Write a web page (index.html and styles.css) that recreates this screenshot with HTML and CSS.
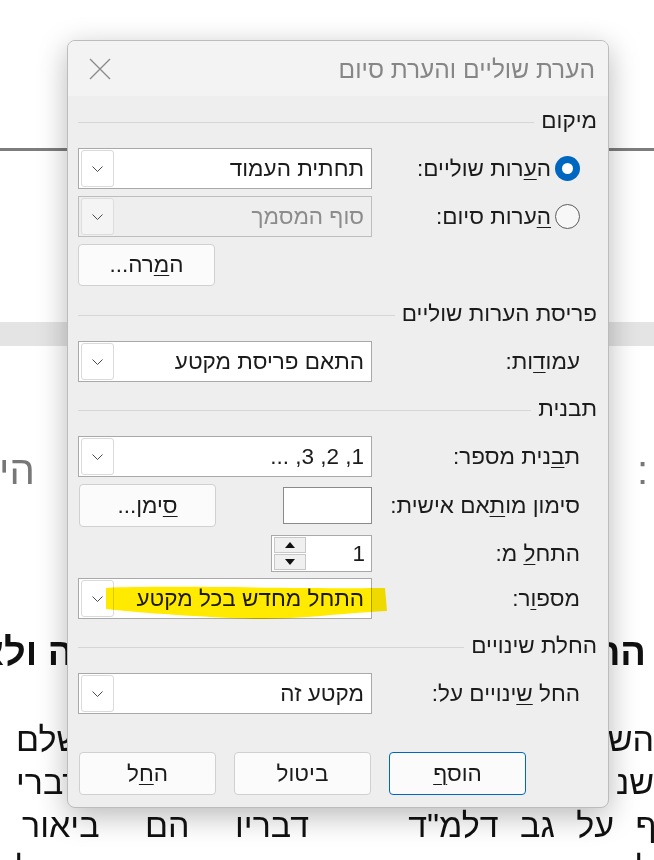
FILE: index.html
```html
<!DOCTYPE html>
<html lang="he" dir="rtl">
<head>
<meta charset="utf-8">
<title>הערת שוליים והערת סיום</title>
<link rel="stylesheet" href="styles.css">
</head>
<body>
<div class="doc">
  <div class="doc-top"></div>
  <div class="doc-rule"></div>
  <div class="doc-mid"></div>
  <div class="doc-band"></div>
  <div class="doc-page">
    <div class="line gray-line"><span>:</span><span>היא</span></div>
    <div class="line head-line"><span>הה</span><span>ה ולא</span></div>
    <div class="line body-line"><span>השו</span><span>שלם</span></div>
    <div class="line body-line"><span>שנ</span><span>דברי</span></div>
    <div class="line body-line cut-right"><span class="grp">אף על גב דלמ"ד</span><span class="grp">דבריו הם ביאור</span></div>
    <div class="line body-line"><span class="grp">לא כמו שכתב</span><span class="grp">הפשטות שבכתב הדל</span></div>
  </div>
</div>

<div class="dialog">
  <div class="titlebar">
    <span class="title">הערת שוליים והערת סיום</span>
    <svg class="close" viewBox="0 0 22 22" aria-hidden="true"><path d="M1 1L21 21M21 1L1 21"/></svg>
  </div>
  <div class="body">
    <div class="group-head first"><span>מיקום</span></div>
    <div class="row">
      <div class="lbl radio-lbl"><span class="radio on"></span><span>ה<u>ע</u>רות שוליים:</span></div>
      <div class="ctl">
        <div class="select"><span class="val">תחתית העמוד</span><span class="drop"><svg viewBox="0 0 11 6"><path d="M0.5 0.5L5.5 5.5L10.5 0.5"/></svg></span></div>
      </div>
    </div>
    <div class="row gap7">
      <div class="lbl radio-lbl"><span class="radio"></span><span><u>ה</u>ערות סיום:</span></div>
      <div class="ctl">
        <div class="select disabled"><span class="val">סוף המסמך</span><span class="drop"><svg viewBox="0 0 11 6"><path d="M0.5 0.5L5.5 5.5L10.5 0.5"/></svg></span></div>
      </div>
    </div>
    <div class="row gap7 btn-row">
      <div class="lbl"></div>
      <div class="ctl end"><button class="btn">ה<u>מ</u>רה...</button></div>
    </div>

    <div class="group-head second"><span>פריסת הערות שוליים</span></div>
    <div class="row">
      <div class="lbl"><span>עמו<u>ד</u>ות:</span></div>
      <div class="ctl">
        <div class="select"><span class="val">התאם פריסת מקטע</span><span class="drop"><svg viewBox="0 0 11 6"><path d="M0.5 0.5L5.5 5.5L10.5 0.5"/></svg></span></div>
      </div>
    </div>

    <div class="group-head"><span>תבנית</span></div>
    <div class="row">
      <div class="lbl"><span>ת<u>ב</u>נית מספר:</span></div>
      <div class="ctl">
        <div class="select"><span class="val">1, 2, 3, ...</span><span class="drop"><svg viewBox="0 0 11 6"><path d="M0.5 0.5L5.5 5.5L10.5 0.5"/></svg></span></div>
      </div>
    </div>
    <div class="row gap7 mark-row">
      <div class="lbl"><span>סימון מו<u>ת</u>אם אישית:</span></div>
      <div class="ctl between">
        <div class="textbox"></div>
        <button class="btn"><u>ס</u>ימן...</button>
      </div>
    </div>
    <div class="row spin-row">
      <div class="lbl"><span>התח<u>ל</u> מ:</span></div>
      <div class="ctl">
        <div class="spin">
          <span class="spin-val">1</span>
          <span class="spin-btns">
            <span class="spin-btn"><svg viewBox="0 0 10 6"><path d="M0 6L5 0L10 6Z"/></svg></span>
            <span class="spin-btn"><svg viewBox="0 0 10 6"><path d="M0 0L10 0L5 6Z"/></svg></span>
          </span>
        </div>
      </div>
    </div>
    <div class="row gap6">
      <div class="lbl"><span>מספ<u>ו</u>ר:</span></div>
      <div class="ctl">
        <div class="select"><span class="val">התחל מחדש בכל מקטע</span><span class="drop"><svg viewBox="0 0 11 6"><path d="M0.5 0.5L5.5 5.5L10.5 0.5"/></svg></span></div>
      </div>
    </div>

    <div class="group-head"><span>החלת שינויים</span></div>
    <div class="row">
      <div class="lbl"><span>החל <u>ש</u>ינויים על:</span></div>
      <div class="ctl">
        <div class="select"><span class="val">מקטע זה</span><span class="drop"><svg viewBox="0 0 11 6"><path d="M0.5 0.5L5.5 5.5L10.5 0.5"/></svg></span></div>
      </div>
    </div>

    <div class="actions">
      <button class="btn default">הוס<u>ף</u></button>
      <button class="btn">ביטול</button>
      <button class="btn">ה<u>ח</u>ל</button>
    </div>
  </div>
  <svg class="marker" viewBox="0 0 290 40" aria-hidden="true"><path d="M4 5C60 2 200 6 283 5L285 28C230 31 200 36 153 36C100 34 40 30 4 26Z"/></svg>
</div>
</body>
</html>
```

FILE: styles.css
```css
* { box-sizing: border-box; }
html, body { margin: 0; padding: 0; }
body {
  width: 654px;
  height: 860px;
  overflow: hidden;
  background: #ffffff;
  font-family: "Liberation Sans", Arial, sans-serif;
  position: relative;
}

/* background document */
.doc-top { height: 148px; }
.doc-rule { height: 3px; background: #7d7d7d; }
.doc-mid { height: 171px; }
.doc-band { height: 24px; background: #e4e4e4; }
.doc-page { padding-top: 102px; }
.line {
  display: flex;
  justify-content: space-between;
  white-space: nowrap;
  color: #111;
}
.gray-line { font-size: 40px; line-height: 44px; color: #777; margin-left: -26px; padding-right: 6px; }
.head-line { font-size: 38px; font-weight: bold; line-height: 44px; margin-top: 138px; margin-left: -22px; padding-right: 8px; }
.body-line { font-size: 34px; line-height: 43px; padding-left: 16px; }
.head-line + .body-line { margin-top: 44px; }
.cut-right { margin-right: -24px; padding-left: 22px; }
.grp { word-spacing: 12px; }
.cut-right .grp:last-child { word-spacing: 36px; }

/* dialog */
.dialog {
  position: absolute;
  left: 67px;
  top: 40px;
  width: 542px;
  height: 768px;
  background: #eeeeee;
  border: 1px solid #bcbcbc;
  border-radius: 8px;
  box-shadow: 0 8px 30px rgba(0, 0, 0, 0.28);
  overflow: hidden;
  direction: rtl;
  color: #1b1b1b;
  font-size: 22.5px;
}
.titlebar {
  height: 55px;
  background: #f3f3f3;
  display: flex;
  align-items: center;
  justify-content: space-between;
  padding: 3px 13px 0 21px;
}
.title { font-size: 24.5px; color: #868686; }
.close { width: 22px; height: 22px; fill: none; stroke: #8a8a8a; stroke-width: 1.3; margin-top: -3px; }

.body {
  display: flex;
  flex-direction: column;
  padding: 0 11px 0 10px;
}
.group-head {
  display: flex;
  align-items: center;
  height: 20px;
  margin-top: 17px;
  gap: 7px;
}
.group-head.first { margin-top: 15px; }
.group-head.second { margin-top: 18px; }
.group-head::after {
  content: "";
  flex: 1;
  height: 1px;
  background: #d6d6d6;
  margin-top: 2px;
}
.group-head + .row { margin-top: 17px; }

.row { display: flex; height: 41px; }
.gap7 { margin-top: 7px; }
.gap6 { margin-top: 6px; }
.lbl {
  width: 225px;
  display: flex;
  align-items: center;
  padding-right: 17px;
  gap: 4px;
  white-space: nowrap;
}
u { text-decoration: underline; text-underline-offset: 3px; text-decoration-thickness: 1px; }
.ctl { width: 294px; display: flex; align-items: center; }
.ctl.end { justify-content: flex-end; }
.ctl.between { justify-content: space-between; }

.radio {
  width: 25px;
  height: 25px;
  border-radius: 50%;
  border: 1px solid #5c5c5c;
  background: #f7f7f7;
  flex: none;
}
.radio.on {
  background: #0067c0;
  border: none;
  position: relative;
}
.radio.on::after {
  content: "";
  position: absolute;
  left: 7px;
  top: 7px;
  width: 11px;
  height: 11px;
  border-radius: 50%;
  background: #fff;
}

.select {
  width: 294px;
  height: 41px;
  border: 1px solid #a9a9a9;
  background: #fff;
  display: flex;
  align-items: center;
}
.val { flex: 1; padding-right: 7px; white-space: nowrap; }
.drop {
  width: 33px;
  height: 37px;
  margin-left: 2px;
  border: 1px solid #dadada;
  border-radius: 3px;
  display: flex;
  align-items: center;
  justify-content: center;
  background: #fff;
}
.drop svg { width: 11px; height: 6px; fill: none; stroke: #4a4a4a; stroke-width: 1; }
.select.disabled { background: #eeeeee; border-color: #bdbdbd; color: #8c8c8c; }
.select.disabled .drop { background: #f4f4f4; border-color: #dddddd; }

.btn {
  font: inherit;
  color: #1b1b1b;
  width: 137px;
  height: 42px;
  background: #fbfbfb;
  border: 1px solid #d0d0d0;
  border-radius: 4px;
  padding: 0;
  margin: 0;
}
.btn.default { border-color: #0067c0; }
.btn-row { height: 42px; }
.mark-row { height: 43px; }
.mark-row .btn { height: 43px; margin-left: 1px; }

.textbox {
  width: 89px;
  height: 37px;
  border: 1px solid #8a8a8a;
  background: #fff;
}

.spin-row { height: 37px; margin-top: 8px; }
.spin {
  width: 101px;
  height: 37px;
  border: 1px solid #a9a9a9;
  background: #fff;
  display: flex;
  align-items: center;
}
.spin-val { flex: 1; padding-right: 6px; }
.spin-btns {
  width: 32px;
  height: 33px;
  margin-left: 2px;
  display: flex;
  flex-direction: column;
  gap: 1px;
}
.spin-btn {
  flex: 1;
  background: #f0f0f0;
  border: 1px solid #c8c8c8;
  display: flex;
  align-items: center;
  justify-content: center;
}
.spin-btn svg { width: 10px; height: 6px; fill: #111; }

.actions {
  display: flex;
  justify-content: flex-end;
  gap: 18px;
  margin-top: 38px;
  padding-left: 1px;
}
.actions .btn { height: 43px; }

.marker {
  position: absolute;
  left: 34px;
  top: 542px;
  width: 290px;
  height: 40px;
  fill: #ffea00;
  mix-blend-mode: multiply;
}
```
